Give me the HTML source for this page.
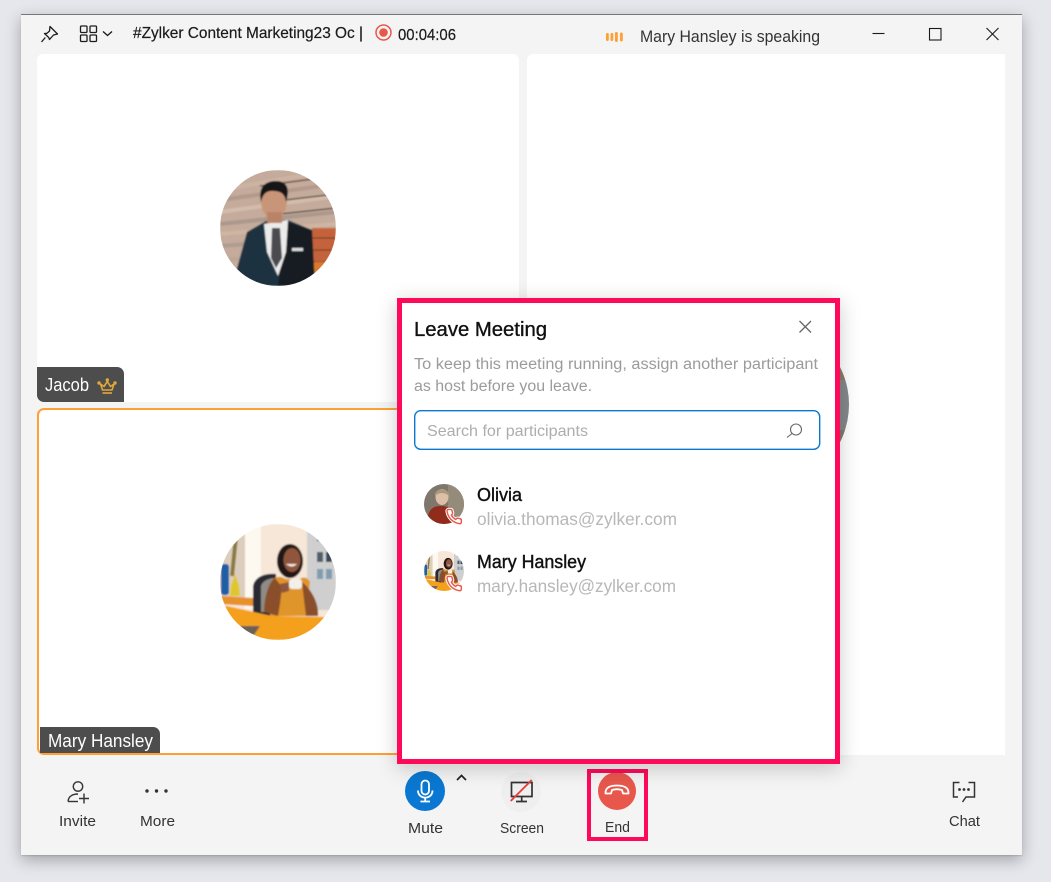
<!DOCTYPE html>
<html lang="en">
<head>
<meta charset="utf-8">
<title>Leave Meeting</title>
<style>
html,body{margin:0;padding:0;width:1051px;height:882px;overflow:hidden;background:#e6e7ed;}
body{position:relative;font-family:"Liberation Sans",sans-serif;}
svg{position:absolute;left:0;top:0;display:block;}
text{font-family:"Liberation Sans",sans-serif;}
.win{position:absolute;left:21px;top:14px;width:1001px;height:841px;background:#f4f4f4;box-shadow:0 5px 15px rgba(0,0,0,.3),0 1px 1px rgba(0,0,0,.12);border-top:1px solid #77777a;box-sizing:border-box;}
.tile{position:absolute;background:#fff;}
.modal{position:absolute;left:397px;top:298px;width:443px;height:466px;box-sizing:border-box;background:#fff;border:5px solid #ff0a5a;box-shadow:0 4px 20px rgba(0,0,0,.2);}
.end{position:absolute;left:587px;top:769px;width:61px;height:72px;box-sizing:border-box;border:4px solid #ff0a5a;}
</style>
</head>
<body>
<div class="win"></div>
<div class="tile" style="left:37px;top:54px;width:482px;height:348px;border-radius:6px 6px 0 6px"></div>
<div class="tile" style="left:527px;top:54px;width:478px;height:701px;border-radius:6px 0 0 0"></div>
<div class="tile" style="left:37px;top:408px;width:482px;height:347px;box-sizing:border-box;border:2px solid #ff9f35;border-radius:7px 7px 0 7px"></div>
<div class="tile" style="left:37px;top:367px;width:87px;height:35px;background:#4d4d4d;border-radius:0 7px 0 7px"></div>
<div class="tile" style="left:40px;top:727px;width:120px;height:26px;background:#4d4d4d;border-radius:0 7px 0 0"></div>

<svg width="1051" height="882" viewBox="0 0 1051 882" xmlns="http://www.w3.org/2000/svg">
<defs>
<filter id="b" x="-10%" y="-10%" width="120%" height="120%"><feGaussianBlur stdDeviation="0.7"/></filter>
<clipPath id="c1"><circle cx="58" cy="58" r="58"/></clipPath>
<clipPath id="c2"><circle cx="20" cy="20" r="20"/></clipPath>
<symbol id="man" viewBox="0 0 116 116">
<g clip-path="url(#c1)"><g filter="url(#b)">
<rect width="116" height="116" fill="#c4ab9b"/>
<g stroke-width="4">
<path d="M0 20 L116 0" stroke="#cdb3a2"/><path d="M0 30 L116 14" stroke="#b39a8b"/><path d="M0 42 L116 26" stroke="#d4bcac"/>
<path d="M0 54 L116 42" stroke="#ac988c"/><path d="M0 64 L116 54" stroke="#cfb5a3"/><path d="M0 76 L116 68" stroke="#b09c91"/>
<path d="M0 90 L116 84" stroke="#bda697"/>
</g>
<path d="M40 16 L116 6 M48 32 L116 24 M60 44 L116 38" stroke="#4b3d36" stroke-width="1.200"/>
<rect x="92" y="58" width="24" height="58" fill="#c4643a"/>
<path d="M92 68H116M92 80H116M92 92H116" stroke="#7d3f28" stroke-width="1.300"/>
<rect x="92" y="92" width="24" height="14" fill="#d9782e"/>
<path d="M16 102 L27 62 L46 51 L68 50 L92 60 L95 116 L24 116 Z" fill="#1f3240"/>
<path d="M58 116 L66 52 L92 60 L95 116Z" fill="#131a24"/>
<path d="M44 54 L68 50 L66 82 L58 106 L47 82Z" fill="#ecebeb"/>
<path d="M52 58 L60 58 L62 88 L56 98 L51 88Z" fill="#4c4b50"/>
<rect x="72" y="78" width="11" height="3" fill="#dcdcdc"/>
<ellipse cx="54" cy="31" rx="13" ry="18" fill="#c99578"/>
<rect x="47" y="42" width="15" height="11" fill="#b98368"/>
<path d="M41 32 C37 13 50 11 56 11 C68 11 70 20 66 32 C65 23 60 21 52 21 C46 21 43 24 41 32Z" fill="#191618"/>
</g></g>
</symbol>
<symbol id="mary" viewBox="0 0 116 116">
<g clip-path="url(#c1)"><g filter="url(#b)">
<rect width="116" height="116" fill="#f6e7d8"/>
<rect x="0" y="0" width="25" height="80" fill="#dccdbd"/>
<rect x="25" y="0" width="16" height="85" fill="#fdf8f0"/>
<rect x="87" y="6" width="29" height="80" fill="#cfcfcf"/>
<rect x="97" y="12" width="6" height="5" fill="#3e4f5c"/>
<rect x="97" y="28" width="6" height="10" fill="#4d5e6a"/><rect x="106" y="28" width="6" height="10" fill="#34495a"/>
<rect x="97" y="45" width="6" height="10" fill="#7f9db2"/><rect x="106" y="45" width="6" height="10" fill="#7f9db2"/>
<path d="M16 12 L12 52" stroke="#8a7a40" stroke-width="4"/>
<rect x="1" y="40" width="8" height="31" rx="3" fill="#1b5ea8"/>
<path d="M10 72 L11 62 L15 50 L19 62 L20 72Z" fill="#dfc72a"/>
<path d="M0 72 L33 74 L33 82 L0 80Z" fill="#e8912a"/>
<path d="M33 92 L33 62 C35 52 46 49 56 50 L56 92Z" fill="#2c2c30"/>
<path d="M41 88 L41 62 C43 56 50 54 56 54 L56 88Z" fill="#8f8b86"/>
<ellipse cx="70" cy="37" rx="13" ry="17" fill="#241713"/>
<ellipse cx="72" cy="36" rx="8.500" ry="12" fill="#8f573c"/>
<path d="M66 40 Q72 45 77 40" fill="#f3e8e0"/>
<path d="M50 92 L52 56 C56 52 60 52 66 55 L80 55 C84 52 88 54 90 58 L86 92Z" fill="#e0952c"/>
<path d="M44 88 C44 72 50 56 55 54 L62 63 L60 80 L58 92Z" fill="#8a4f2c"/>
<path d="M82 58 C92 66 99 80 98 92 L86 92 L84 76Z" fill="#8a4f2c"/>
<rect x="69" y="55" width="13" height="10" rx="3" fill="#f3f0ea"/>
<path d="M60 60 L69 58 L69 67 L62 69Z" fill="#8f573c"/>
<path d="M7 82 L52 92 L103 93 L116 92 L116 116 L0 116 L0 82Z" fill="#f4a01d"/>
<path d="M20 102 L40 102 L34 111 L24 110Z" fill="#6d6156"/>
</g></g>
</symbol>
<symbol id="olivia" viewBox="0 0 40 40">
<g clip-path="url(#c2)">
<rect width="40" height="40" fill="#7f776c"/>
<rect x="24" width="16" height="40" fill="#948b7a"/>
<path d="M3 42 C3 26 8 22 17 22 C26 22 30 28 30 42Z" fill="#8f2c1c"/>
<ellipse cx="18" cy="13" rx="6.500" ry="8" fill="#dcbfa6"/>
<path d="M11 12 C10 3 26 3 25 12 C21 8 15 8 11 12Z" fill="#a99a7e"/>
</g>
</symbol>
</defs>

<!-- title bar -->
<g fill="none" stroke="#1c1c1c" stroke-width="1.300">
<path d="M50 26.500 L57.500 34 L53.500 35 L49.500 39.500 L48.700 37.500 L44.500 33.500 L47 33.300 L49.500 31 Z" stroke-linejoin="round"/>
<path d="M45.300 37.500 L41.500 42"/>
<rect x="80.500" y="26" width="6.500" height="6.500" rx="1"/><rect x="90" y="26" width="6.500" height="6.500" rx="1"/>
<rect x="80.500" y="35" width="6.500" height="6.500" rx="1"/><rect x="90" y="35" width="6.500" height="6.500" rx="1"/>
<path d="M103 31.500 L107.500 35.500 L112 31.500" stroke-width="1.400"/>
</g>
<text x="133" y="38" font-size="16" fill="#1a1a1a" stroke="#1a1a1a" stroke-width=".2" textLength="230" lengthAdjust="spacingAndGlyphs">#Zylker Content Marketing23 Oc |</text>
<circle cx="383.500" cy="32.500" r="7.500" fill="none" stroke="#e8574c" stroke-width="1.500"/>
<circle cx="383.500" cy="32.500" r="4.300" fill="#e8574c"/>
<text x="398" y="40" font-size="16" fill="#1a1a1a" stroke="#1a1a1a" stroke-width=".2" textLength="58" lengthAdjust="spacingAndGlyphs">00:04:06</text>
<g fill="#ff9f35">
<rect x="606" y="33" width="2.800" height="8" rx="1.200"/><rect x="610.500" y="33" width="2.800" height="8" rx="1.200"/>
<rect x="615" y="32" width="2.800" height="10" rx="1.200"/><rect x="620" y="32.500" width="2.800" height="9" rx="1.200"/>
</g>
<text x="640" y="42" font-size="17" fill="#333" textLength="180" lengthAdjust="spacingAndGlyphs">Mary Hansley is speaking</text>
<g fill="none" stroke="#1a1a1a" stroke-width="1.100">
<path d="M872.500 33.500H884.500"/>
<rect x="929.500" y="28.500" width="11.500" height="11.500"/>
<path d="M986.500 28L998.500 40M998.500 28L986.500 40"/>
</g>

<!-- video avatars -->
<use href="#man" x="220" y="170" width="116" height="116"/>
<use href="#mary" x="220" y="524" width="116" height="116"/>
<circle cx="766" cy="404.500" r="83" fill="#85888b"/>
<path d="M825 346 A83 83 0 0 1 845 380 L838 380 Z" fill="#8d7a68"/>
<path d="M845 430 A83 83 0 0 1 826 462 L838 430Z" fill="#86786c"/>

<!-- labels -->
<text x="45" y="391" font-size="18" fill="#fff" textLength="44" lengthAdjust="spacingAndGlyphs">Jacob</text>
<g fill="none" stroke="#e3a73a" stroke-width="1.600">
<path d="M100.500 384 L102.500 390 H112 L114 384 L110.500 386.500 L107.300 381.500 L104 386.500 Z" stroke-linejoin="round"/>
<path d="M102.500 393H112"/>
</g>
<circle cx="99" cy="383" r="1.700" fill="#e3a73a"/><circle cx="115" cy="383" r="1.700" fill="#e3a73a"/><circle cx="107.300" cy="380" r="1.700" fill="#e3a73a"/>
<text x="48" y="747" font-size="18" fill="#fff" textLength="105" lengthAdjust="spacingAndGlyphs">Mary Hansley</text>

<!-- toolbar left -->
<g fill="none" stroke="#333" stroke-width="1.400">
<circle cx="78" cy="786.500" r="4.700"/>
<path d="M68 801.500 C68.500 796 73 794 78 794"/><path d="M68 801.500H78"/>
<path d="M79 798.500H89M84 793.500V803.500"/>
</g>
<g fill="#333"><circle cx="147" cy="791" r="1.700"/><circle cx="156.500" cy="791" r="1.700"/><circle cx="166" cy="791" r="1.700"/></g>
<text x="59" y="826" font-size="15" fill="#333" textLength="37" lengthAdjust="spacingAndGlyphs">Invite</text>
<text x="140" y="826" font-size="15" fill="#333" textLength="35" lengthAdjust="spacingAndGlyphs">More</text>

<!-- mute -->
<circle cx="425" cy="791" r="20" fill="#0a78d2"/>
<g fill="none" stroke="#fff" stroke-width="1.800">
<rect x="421.500" y="780.500" width="7.500" height="14" rx="3.700"/>
<path d="M418 790.500 C418 800 432.500 800 432.500 790.500"/>
<path d="M425.200 797.500V801.500M420.500 801.500H430"/>
</g>
<path d="M457 780 L461.500 775.500 L466 780" fill="none" stroke="#222" stroke-width="1.700"/>
<text x="408" y="833" font-size="15" fill="#333" textLength="35" lengthAdjust="spacingAndGlyphs">Mute</text>

<!-- screen -->
<circle cx="521" cy="792" r="20" fill="#efefef"/>
<g fill="none" stroke="#333" stroke-width="1.700">
<path d="M511.500 782.500H532V796.500H511.500Z"/><path d="M521.700 797V801.500M516 801.500H527"/>
</g>
<path d="M510.700 801 L531.700 780" stroke="#e8403a" stroke-width="1.900"/>
<text x="500" y="833" font-size="15" fill="#333" textLength="44" lengthAdjust="spacingAndGlyphs">Screen</text>

<!-- end -->
<circle cx="617" cy="791" r="19" fill="#e8574c"/>
<path d="M605.500 793.500 C605 787 611 785.500 617 785.500 C623 785.500 629 787 628.500 793.500 L623 793.500 L622 790 C619 789 615 789 612 790 L611 793.500 Z" fill="none" stroke="#fff" stroke-width="1.800" stroke-linejoin="round"/>
<text x="605" y="832" font-size="15" fill="#333" textLength="25" lengthAdjust="spacingAndGlyphs">End</text>

<!-- chat -->
<g fill="none" stroke="#333" stroke-width="1.500">
<path d="M959.500 782.500H953.500V797H958"/>
<path d="M968.500 782.500H974.500V797H966L962.500 802"/>
</g>
<g fill="#333"><circle cx="959.500" cy="789.500" r="1.400"/><circle cx="964" cy="789.500" r="1.400"/><circle cx="968.500" cy="789.500" r="1.400"/></g>
<text x="949" y="826" font-size="15" fill="#333" textLength="31" lengthAdjust="spacingAndGlyphs">Chat</text>
</svg>

<div class="end"></div>
<div class="modal"></div>

<svg width="1051" height="882" viewBox="0 0 1051 882" xmlns="http://www.w3.org/2000/svg">
<text x="414" y="336" font-size="20" fill="#111" stroke="#111" stroke-width=".35" textLength="133" lengthAdjust="spacingAndGlyphs">Leave Meeting</text>
<path d="M799.500 321L811 332.500M811 321L799.500 332.500" fill="none" stroke="#666" stroke-width="1.300"/>
<text x="414" y="369" font-size="15.500" fill="#9b9b9b" textLength="404" lengthAdjust="spacingAndGlyphs">To keep this meeting running, assign another participant</text>
<text x="414" y="391" font-size="15.500" fill="#9b9b9b" textLength="178" lengthAdjust="spacingAndGlyphs">as host before you leave.</text>
<rect x="414.700" y="410.700" width="405" height="38.600" rx="6" fill="#fff" stroke="#0a78d2" stroke-width="1.400"/>
<text x="427" y="436" font-size="16" fill="#adadad" textLength="161" lengthAdjust="spacingAndGlyphs">Search for participants</text>
<g fill="none" stroke="#666" stroke-width="1.100"><circle cx="796" cy="429.500" r="5.500"/><path d="M792 433.500L787 437.500"/></g>

<use href="#olivia" x="424" y="484" width="40" height="40"/>
<use href="#mary" x="424" y="551" width="40" height="40"/>
<g fill="#fff" stroke-linejoin="round" stroke-linecap="round">
<g transform="translate(445.500 508) scale(.72)">
<path id="ph" d="M22 16.900v3a2 2 0 0 1-2.200 2 19.800 19.800 0 0 1-8.600-3.100 19.500 19.500 0 0 1-6-6 19.800 19.800 0 0 1-3.100-8.700A2 2 0 0 1 4.100 2h3a2 2 0 0 1 2 1.700c.1 1 .4 1.900.7 2.800a2 2 0 0 1-.5 2.100L8.100 9.900a16 16 0 0 0 6 6l1.300-1.300a2 2 0 0 1 2.100-.4c.9.300 1.800.6 2.800.7a2 2 0 0 1 1.700 2z" stroke="#fff" stroke-width="4.500"/>
<path d="M22 16.900v3a2 2 0 0 1-2.200 2 19.800 19.800 0 0 1-8.600-3.100 19.500 19.500 0 0 1-6-6 19.800 19.800 0 0 1-3.100-8.700A2 2 0 0 1 4.100 2h3a2 2 0 0 1 2 1.700c.1 1 .4 1.900.7 2.800a2 2 0 0 1-.5 2.100L8.100 9.900a16 16 0 0 0 6 6l1.300-1.300a2 2 0 0 1 2.100-.4c.9.300 1.800.6 2.800.7a2 2 0 0 1 1.700 2z" stroke="#e8574c" stroke-width="2"/>
</g>
<g transform="translate(445.500 575) scale(.72)">
<path d="M22 16.900v3a2 2 0 0 1-2.200 2 19.800 19.800 0 0 1-8.600-3.100 19.500 19.500 0 0 1-6-6 19.800 19.800 0 0 1-3.100-8.700A2 2 0 0 1 4.100 2h3a2 2 0 0 1 2 1.700c.1 1 .4 1.900.7 2.800a2 2 0 0 1-.5 2.100L8.100 9.900a16 16 0 0 0 6 6l1.300-1.300a2 2 0 0 1 2.100-.4c.9.300 1.800.6 2.800.7a2 2 0 0 1 1.700 2z" stroke="#fff" stroke-width="4.500"/>
<path d="M22 16.900v3a2 2 0 0 1-2.200 2 19.800 19.800 0 0 1-8.600-3.100 19.500 19.500 0 0 1-6-6 19.800 19.800 0 0 1-3.100-8.700A2 2 0 0 1 4.100 2h3a2 2 0 0 1 2 1.700c.1 1 .4 1.900.7 2.800a2 2 0 0 1-.5 2.100L8.100 9.900a16 16 0 0 0 6 6l1.300-1.300a2 2 0 0 1 2.100-.4c.9.300 1.800.6 2.800.7a2 2 0 0 1 1.700 2z" stroke="#e8574c" stroke-width="2"/>
</g>
</g>
<text x="477" y="501" font-size="18" fill="#111" stroke="#111" stroke-width=".4" textLength="45" lengthAdjust="spacingAndGlyphs">Olivia</text>
<text x="477" y="525" font-size="17.500" fill="#b7b7b7" textLength="200" lengthAdjust="spacingAndGlyphs">olivia.thomas@zylker.com</text>
<text x="477" y="568" font-size="18" fill="#111" stroke="#111" stroke-width=".4" textLength="109" lengthAdjust="spacingAndGlyphs">Mary Hansley</text>
<text x="477" y="592" font-size="17.500" fill="#b7b7b7" textLength="199" lengthAdjust="spacingAndGlyphs">mary.hansley@zylker.com</text>
</svg>
</body>
</html>
